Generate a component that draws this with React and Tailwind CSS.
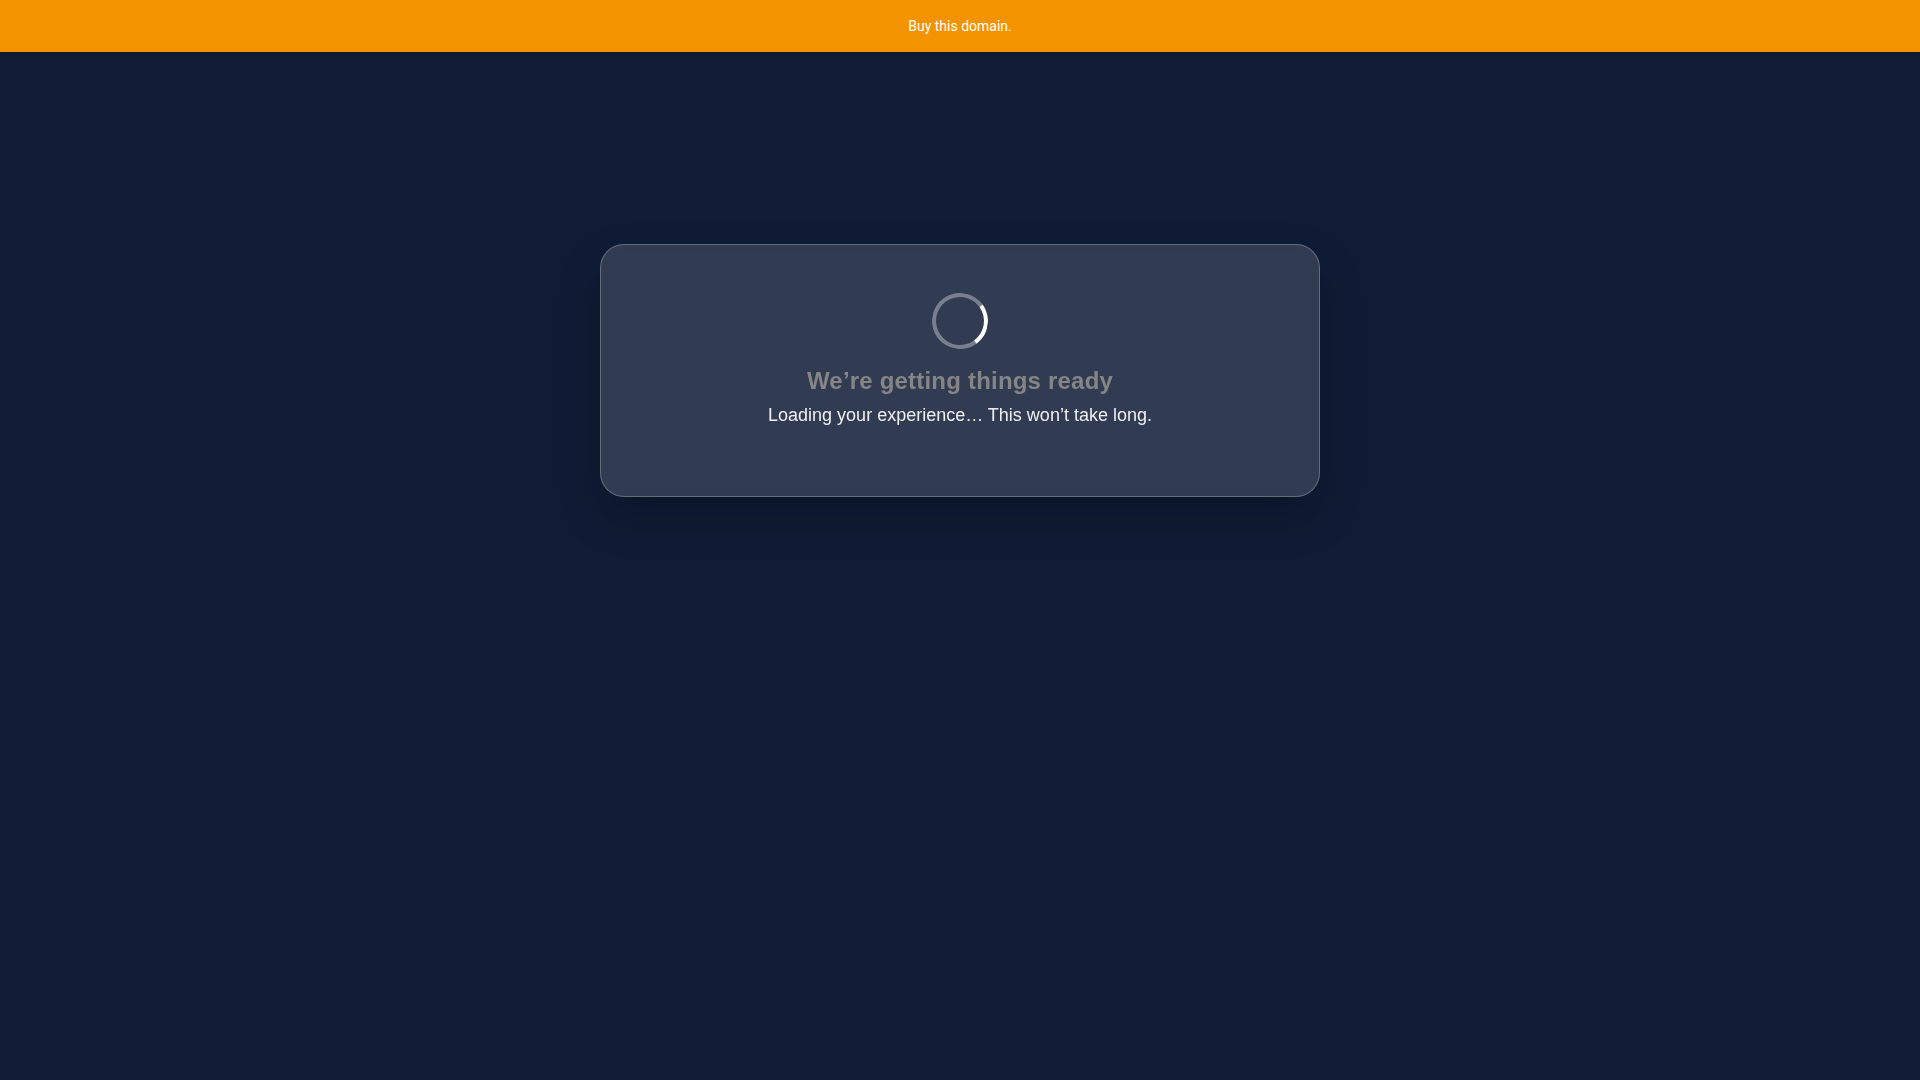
function Spinner() {
  return (
    <div
      role="status"
      aria-label="Loading"
      className="h-14 w-14 rotate-[99deg] rounded-full border-4 border-white/35 border-t-white"
    />
  )
}

export default function App() {
  return (
    <div className="min-h-screen bg-[#101c36] font-['Liberation_Sans',Arial,sans-serif]">
      <header className="bg-[#f49300] p-4 text-center font-[Roboto,sans-serif] text-sm text-white">
        <a href="#buy">Buy this domain.</a>
      </header>

      <main className="px-6 pt-48">
        <section className="mx-auto flex max-w-[720px] flex-col items-center rounded-3xl border border-white/25 bg-white/14 px-8 pt-12 pb-[67px] text-center shadow-[0_20px_40px_rgba(0,0,0,0.25)] backdrop-blur-sm">
          <Spinner />
          <h1 className="mt-4 text-2xl font-bold tracking-[0.2px] text-[#858585]">
            We’re getting things ready
          </h1>
          <p className="mt-1 text-lg text-white/92">
            Loading your experience… This won’t take long.
          </p>
        </section>
      </main>
    </div>
  )
}
